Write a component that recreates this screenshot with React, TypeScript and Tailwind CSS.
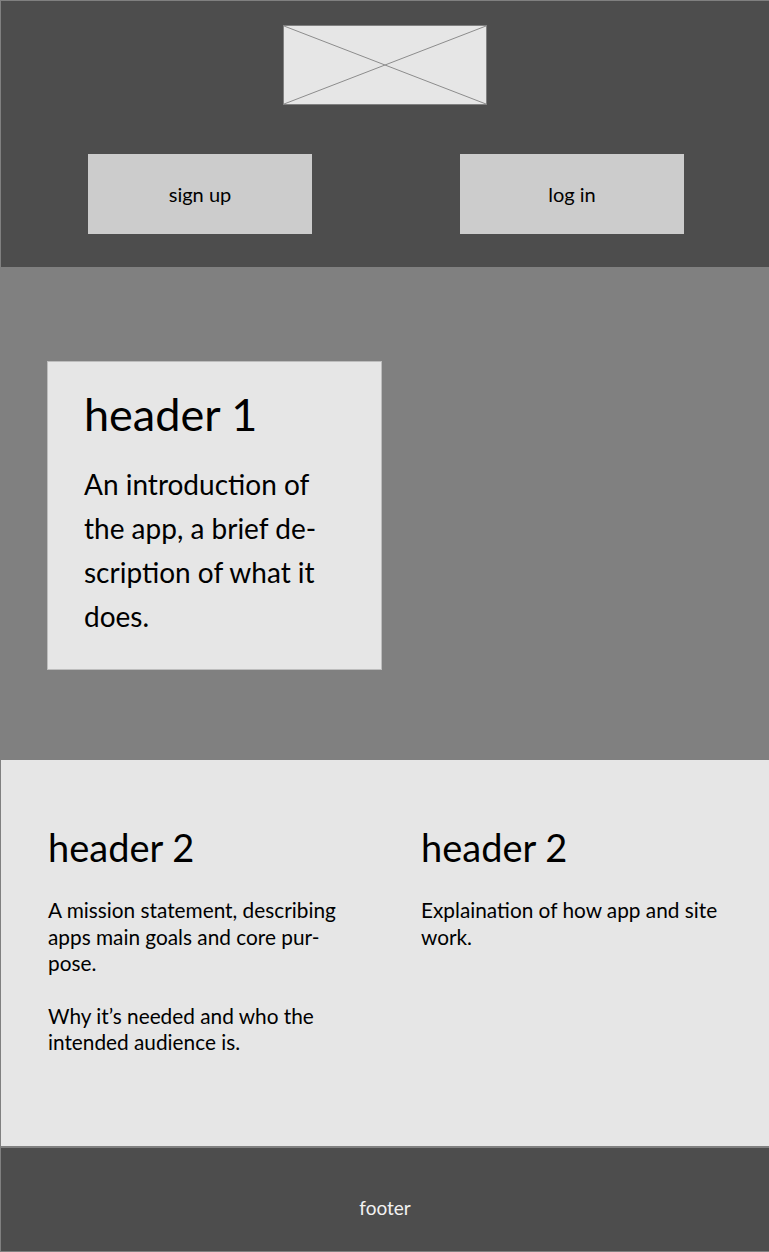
import React from "react";

const font = { fontFamily: '"Lato", "Open Sans", sans-serif' };

const LogoPlaceholder: React.FC = () => (
  <div className="w-[204px] h-[80px] bg-[#e6e6e6] border border-[#808080]">
    <svg width="100%" height="100%" viewBox="0 0 202 78" preserveAspectRatio="none">
      <line x1="0" y1="0" x2="202" y2="78" stroke="#8c8c8c" strokeWidth="1" />
      <line x1="202" y1="0" x2="0" y2="78" stroke="#8c8c8c" strokeWidth="1" />
    </svg>
  </div>
);

export default function App() {
  return (
    <div
      className="w-[769px] min-h-[1252px] flex flex-col border-l border-t border-b border-[#808080] text-black"
      style={font}
    >
      <header className="bg-[#4d4d4d] h-[266px] flex flex-col items-center pt-[24px]">
        <LogoPlaceholder />
        <div className="mt-[49px] flex gap-[148px] pl-[2px]">
          <button className="w-[224px] h-[80px] bg-[#cccccc] text-[20px] text-black">
            sign up
          </button>
          <button className="w-[224px] h-[80px] bg-[#cccccc] text-[20px] text-black">
            log in
          </button>
        </div>
      </header>

      <section className="bg-[#808080] h-[493px] pt-[94px] pl-[46px]">
        <div className="w-[335px] h-[309px] bg-[#e6e6e6] border border-[#bdbdbd] pl-[36px] pt-[21px]">
          <h1 className="text-[45px] leading-[62px]">header 1</h1>
          <p className="mt-[17px] text-[28px] leading-[44px] w-[260px]">
            An introduction of the app, a brief de-scription of what it does.
          </p>
        </div>
      </section>

      <section className="bg-[#e6e6e6] h-[386px] grid grid-cols-[373px_1fr] pl-[47px] pt-[62px]">
        <div>
          <h2 className="text-[38px] leading-[50px]">header 2</h2>
          <div className="mt-[25px] text-[20.8px] leading-[26.5px] w-[310px]">
            <p>A mission statement, describing apps main goals and core pur-pose.</p>
            <p className="mt-[26px]">Why it’s needed and who the intended audience is.</p>
          </div>
        </div>
        <div>
          <h2 className="text-[38px] leading-[50px]">header 2</h2>
          <div className="mt-[25px] text-[20.8px] leading-[26.5px] w-[320px]">
            <p>Explaination of how app and site work.</p>
          </div>
        </div>
      </section>

      <footer className="bg-[#4d4d4d] border-t-2 border-[#808080] flex-1 flex items-center justify-center pt-[18px]">
        <span className="text-[19px] text-[#f2f2f2]">footer</span>
      </footer>
    </div>
  );
}
